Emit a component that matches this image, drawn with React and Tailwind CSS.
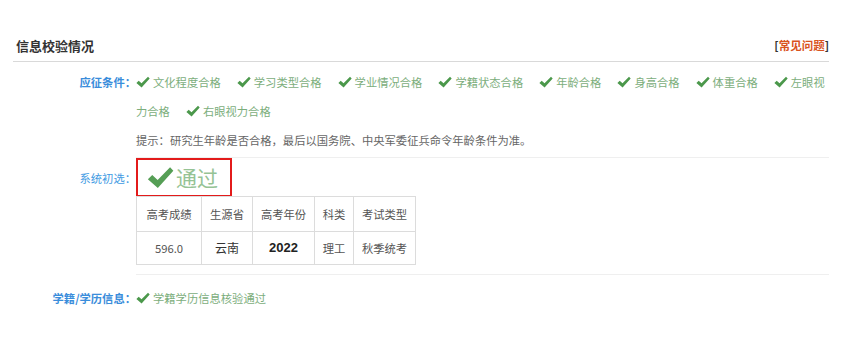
import React from "react";

const Check = ({ className }) => (
  <svg viewBox="0 0 14 12" className={className} aria-hidden="true">
    <path d="M0.4 6.9 L2.7 4.7 L5.5 7.3 L12 0.7 L13.7 2.5 L5.6 11.5 Z" fill="currentColor" />
  </svg>
);

const conditions = [
  "文化程度合格",
  "学习类型合格",
  "学业情况合格",
  "学籍状态合格",
  "年龄合格",
  "身高合格",
  "体重合格",
  "左眼视力合格",
  "右眼视力合格",
];

const headers = [
  { label: "高考成绩", w: "w-[65px]" },
  { label: "生源省", w: "w-[51px]" },
  { label: "高考年份", w: "w-[62px]" },
  { label: "科类", w: "w-[39px]" },
  { label: "考试类型", w: "w-[62px]" },
];

const App = () => {
  return (
    <div className="w-[862px] h-[353px] bg-white pt-[36px] pl-[13px] font-['Noto_Sans_CJK_SC','Noto_Sans',sans-serif]">
      {/* Header */}
      <div className="w-[816px] h-[26px] pb-[5px] pl-[3px] flex items-center justify-between border-b border-[#d9d9d9]">
        <h2 className="text-[13px] font-bold text-[#333]">信息校验情况</h2>
        <span className="text-[11.5px] font-bold text-[#333]">
          [<span className="text-[#d9531e]">常见问题</span>]
        </span>
      </div>

      {/* 应征条件 */}
      <div className="grid grid-cols-[123px_693px] mt-[6px]">
        <div className="text-right text-[11.3px] font-bold text-[#3a8ddb] leading-[29px]">应征条件：</div>
        <div className="border-b border-[#efefef] pb-[2px]">
          <p className="text-[11.3px] leading-[29px] text-[#7cae7c]">
            {conditions.map((c) => (
              <span key={c} className="mr-[16px]">
                <Check className="inline-block w-[14px] h-[12px] mr-[3px] align-[-1px] text-[#4b984b]" />
                {c}
              </span>
            ))}
          </p>
          <p className="text-[11.3px] leading-[29px] text-[#666]">
            提示：研究生年龄是否合格，最后以国务院、中央军委征兵命令年龄条件为准。
          </p>
        </div>
      </div>

      {/* 系统初选 */}
      <div className="grid grid-cols-[123px_693px]">
        <div className="text-right text-[11.3px] text-[#3f9be3] leading-[39px] pt-[1px]">系统初选：</div>
        <div className="border-b border-[#efefef] pb-[9px]">
          <div className="w-[96px] h-[39px] border-2 border-[#e31b1b] flex items-center pl-[9px] gap-[2px]">
            <Check className="w-[27px] h-[23px] text-[#559e55]" />
            <span className="text-[21px] leading-none text-[#95c395]">通过</span>
          </div>
          <table className="table-fixed border-collapse w-[279px] -mt-[1px] text-center text-[11.3px] text-[#555]">
            <thead>
              <tr className="h-[35px]">
                {headers.map((h) => (
                  <th key={h.label} className={`${h.w} border border-[#dcdcdc] font-normal`}>
                    {h.label}
                  </th>
                ))}
              </tr>
            </thead>
            <tbody>
              <tr className="h-[33px]">
                <td className="border border-[#dcdcdc]">596.0</td>
                <td className="border border-[#dcdcdc] text-[12px] text-[#333]">云南</td>
                <td className="border border-[#dcdcdc] text-[13px] font-bold text-[#222] font-['Liberation_Sans',sans-serif]">
                  2022
                </td>
                <td className="border border-[#dcdcdc]">理工</td>
                <td className="border border-[#dcdcdc]">秋季统考</td>
              </tr>
            </tbody>
          </table>
        </div>
      </div>

      {/* 学籍/学历信息 */}
      <div className="grid grid-cols-[123px_693px] mt-[9px]">
        <div className="text-right text-[11.3px] font-bold text-[#3a8ddb] leading-[29px]">学籍/学历信息：</div>
        <p className="text-[11.3px] leading-[29px] text-[#7cae7c]">
          <Check className="inline-block w-[14px] h-[12px] mr-[3px] align-[-1px] text-[#4b984b]" />
          学籍学历信息核验通过
        </p>
      </div>
    </div>
  );
};

export default App;
